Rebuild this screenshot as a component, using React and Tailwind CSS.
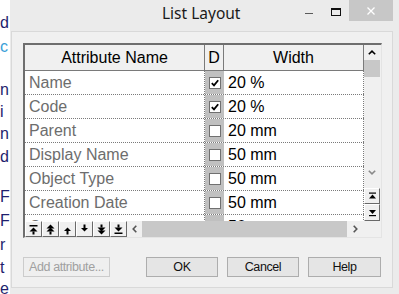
import React from "react";

// text of the window that sits behind the dialog (only the first letters show)
const behindLines = [
  { text: "d", cls: "mt-[13px] text-[#1f1f6e]" },
  { text: "c", cls: "mt-[4px] text-[#3aa0d8]" },
  { text: "n", cls: "mt-[23px] text-[#1f1f6e]" },
  { text: "i", cls: "mt-[2px] text-[#1f1f6e]" },
  { text: "n", cls: "mt-[2px] text-[#1f1f6e]" },
  { text: "d", cls: "mt-[3px] text-[#1f1f6e]" },
  { text: "F", cls: "mt-[20px] text-[#1f1f6e]" },
  { text: "F", cls: "mt-[4px] text-[#1f1f6e]" },
  { text: "r", cls: "mt-[4px] text-[#1f1f6e]" },
  { text: "t", cls: "mt-[3px] text-[#1f1f6e]" },
  { text: "e", cls: "mt-[1px] text-[#1f1f6e]" },
];

const rows = [
  { name: "Name", d: true, width: "20 %" },
  { name: "Code", d: true, width: "20 %" },
  { name: "Parent", d: false, width: "20 mm" },
  { name: "Display Name", d: false, width: "50 mm" },
  { name: "Object Type", d: false, width: "50 mm" },
  { name: "Creation Date", d: false, width: "50 mm" },
  { name: "Comment", d: false, width: "50 mm" },
];

const raised =
  "border border-t-white border-l-white border-r-[#696969] border-b-[#696969] bg-[#f0f0f0] flex items-center justify-center";

const CheckBox = ({ checked }) => (
  <span className="w-[12px] h-[12px] border border-[#707070] bg-white flex items-center justify-center">
    {checked && (
      <svg width="8" height="8" viewBox="0 0 8 8">
        <path d="M0.8 4.2 L3 6.4 L7.2 1.2" stroke="#000" strokeWidth="1.8" fill="none" />
      </svg>
    )}
  </span>
);

// the six move buttons under the list
const moveIcons = [
  <svg width="9" height="11" viewBox="0 0 9 11" key="top">
    <rect x="0.5" y="1" width="8" height="1.5" fill="#000" />
    <path d="M4.5 3.5 L8.5 7.5 L0.5 7.5 Z" fill="#000" />
    <rect x="3.5" y="7.5" width="2" height="3" fill="#000" />
  </svg>,
  <svg width="9" height="11" viewBox="0 0 9 11" key="pgup">
    <path d="M4.5 0.5 L8.5 4.5 L0.5 4.5 Z" fill="#000" />
    <path d="M4.5 3.5 L8.5 7.5 L0.5 7.5 Z" fill="#000" />
    <rect x="3.5" y="7.5" width="2" height="3" fill="#000" />
  </svg>,
  <svg width="9" height="11" viewBox="0 0 9 11" key="up">
    <path d="M4.5 3.5 L8 7 L1 7 Z" fill="#000" />
    <rect x="3.5" y="7" width="2" height="3.5" fill="#000" />
  </svg>,
  <svg width="9" height="11" viewBox="0 0 9 11" key="down">
    <rect x="3.5" y="0.5" width="2" height="3.5" fill="#000" />
    <path d="M1 4 L8 4 L4.5 7.5 Z" fill="#000" />
  </svg>,
  <svg width="9" height="11" viewBox="0 0 9 11" key="pgdn">
    <rect x="3.5" y="0.5" width="2" height="3" fill="#000" />
    <path d="M0.5 3.5 L8.5 3.5 L4.5 7.5 Z" fill="#000" />
    <path d="M0.5 6.5 L8.5 6.5 L4.5 10.5 Z" fill="#000" />
  </svg>,
  <svg width="9" height="11" viewBox="0 0 9 11" key="bottom">
    <rect x="3.5" y="0.5" width="2" height="3" fill="#000" />
    <path d="M0.5 3.5 L8.5 3.5 L4.5 7.5 Z" fill="#000" />
    <rect x="0.5" y="8.5" width="8" height="1.5" fill="#000" />
  </svg>,
];

const App = () => {
  return (
    <div className="w-[399px] h-[294px] flex overflow-hidden bg-white font-['Liberation_Sans',Arial,sans-serif]">
      {/* strip of the window behind */}
      <div className="w-[10px] shrink-0 overflow-hidden bg-white flex flex-col text-[16px] leading-[20px] whitespace-nowrap">
        {behindLines.map((l, i) => (
          <div key={i} className={"h-[20px] " + l.cls}>
            {l.text}
          </div>
        ))}
      </div>

      {/* dialog window */}
      <div className="flex-1 flex flex-col bg-[#ebebeb]">
        {/* title bar */}
        <div className="h-[31px] shrink-0 flex items-start">
          <div className="ml-[152px] mt-[3px] text-[15.5px] leading-[20px] text-[#1a1a1a] font-['Noto_Sans',sans-serif]">
            List Layout
          </div>
          <div className="ml-auto flex items-start">
            <div className="w-[8px] h-[1px] bg-[#5a5a5a] mt-[13px]" />
            <div className="w-[10px] h-[8px] border border-[#111] border-t-2 mt-[8px] ml-[18px]" />
            <div className="w-[44px] h-[21px] bg-[#c7c7c7] ml-[8px] flex items-center justify-center">
              <svg width="8" height="8" viewBox="0 0 8 8">
                <path d="M0.5 0.5 L7.5 7.5 M7.5 0.5 L0.5 7.5" stroke="#fff" strokeWidth="1.3" />
              </svg>
            </div>
            <div className="w-[6px]" />
          </div>
        </div>

        {/* client panel */}
        <div className="ml-[1px] mr-[6px] h-[257px] border border-[#d9d9d9] bg-[#f0f0f0] flex flex-col pl-[11px] pt-[11px]">
          {/* grid */}
          <div className="w-[359px] h-[195px] border-t-2 border-l-2 border-[#6e6e6e] border-r border-b border-r-[#e4e4e4] border-b-[#e4e4e4] flex flex-col">
            <div className="h-[176px] flex">
              {/* table */}
              <div className="w-[339px] flex flex-col overflow-hidden bg-white">
                <div className="h-[26px] shrink-0 flex bg-[#f0f0f0] border-b border-[#7a7a7a] text-[16px] text-black">
                  <div className="w-[180px] border-r border-[#7a7a7a] flex items-center justify-center">
                    Attribute Name
                  </div>
                  <div className="w-[19px] border-r border-[#7a7a7a] flex items-center justify-center">
                    D
                  </div>
                  <div className="flex-1 border-r border-[#7a7a7a] flex items-center justify-center">
                    Width
                  </div>
                </div>
                {rows.map((r) => (
                  <div
                    key={r.name}
                    className="h-[24px] shrink-0 flex border-b border-dotted border-[#7a7a7a] text-[16px]"
                  >
                    <div className="w-[180px] border-r border-dotted border-[#7a7a7a] pl-[4px] flex items-center text-[#6d6d6d]">
                      {r.name}
                    </div>
                    <div className="w-[19px] bg-[#c0c0c0] flex items-center justify-center">
                      <CheckBox checked={r.d} />
                    </div>
                    <div className="flex-1 border-r border-dotted border-[#7a7a7a] pl-[4px] flex items-center text-black">
                      {r.width}
                    </div>
                  </div>
                ))}
              </div>
              {/* vertical scrollbar */}
              <div className="w-[16px] flex flex-col bg-[#f0f0f0]">
                <div className="h-[15px] flex items-center justify-center">
                  <svg width="8" height="5" viewBox="0 0 8 5">
                    <path d="M0.8 4.3 L4 1.2 L7.2 4.3" stroke="#000" strokeWidth="1.6" fill="none" />
                  </svg>
                </div>
                <div className="h-[17px] bg-[#c8c8c8]" />
                <div className="flex-1" />
                <div className="h-[15px] flex items-center justify-center">
                  <svg width="8" height="5" viewBox="0 0 8 5">
                    <path d="M0.8 0.7 L4 3.8 L7.2 0.7" stroke="#8a8a8a" strokeWidth="1.6" fill="none" />
                  </svg>
                </div>
                <div className="h-[8px]" />
                <div className={"h-[16px] " + raised}>
                  <svg width="9" height="8" viewBox="0 0 9 8">
                    <rect x="1" y="0.5" width="7" height="1.2" fill="#000" />
                    <path d="M4.5 2.5 L8 6.5 L1 6.5 Z" fill="#000" />
                  </svg>
                </div>
                <div className={"h-[17px] " + raised}>
                  <svg width="9" height="8" viewBox="0 0 9 8">
                    <path d="M1 1 L8 1 L4.5 5 Z" fill="#000" />
                    <rect x="1" y="6" width="7" height="1.2" fill="#000" />
                  </svg>
                </div>
              </div>
            </div>
            {/* move buttons + horizontal scrollbar */}
            <div className="h-[16px] flex bg-[#f0f0f0]">
              {moveIcons.map((icon, i) => (
                <div key={i} className={"w-[17px] " + raised}>
                  {icon}
                </div>
              ))}
              <div className="w-[15px] flex items-center justify-center">
                <svg width="5" height="8" viewBox="0 0 5 8">
                  <path d="M4.3 0.8 L1.2 4 L4.3 7.2" stroke="#555" strokeWidth="1.6" fill="none" />
                </svg>
              </div>
              <div className="w-[205px] bg-[#c8c8c8]" />
              <div className="w-[17px] flex items-center justify-center">
                <svg width="5" height="8" viewBox="0 0 5 8">
                  <path d="M0.7 0.8 L3.8 4 L0.7 7.2" stroke="#555" strokeWidth="1.6" fill="none" />
                </svg>
              </div>
              <div className="flex-1" />
            </div>
          </div>

          {/* dialog buttons */}
          <div className="mt-[19px] flex text-[12.5px] tracking-[-0.4px]">
            <div className="w-[87px] h-[20px] border border-[#cccccc] bg-[#efefef] text-[#a0a0a0] flex items-center justify-center">
              Add attribute...
            </div>
            <div className="ml-[36px] w-[72px] h-[20px] border border-[#adadad] bg-[#e5e5e5] text-[#111] flex items-center justify-center">
              OK
            </div>
            <div className="ml-[9px] w-[72px] h-[20px] border border-[#adadad] bg-[#e5e5e5] text-[#111] flex items-center justify-center">
              Cancel
            </div>
            <div className="ml-[9px] w-[73px] h-[20px] border border-[#adadad] bg-[#e5e5e5] text-[#111] flex items-center justify-center">
              Help
            </div>
          </div>
        </div>
      </div>
    </div>
  );
};

export default App;
